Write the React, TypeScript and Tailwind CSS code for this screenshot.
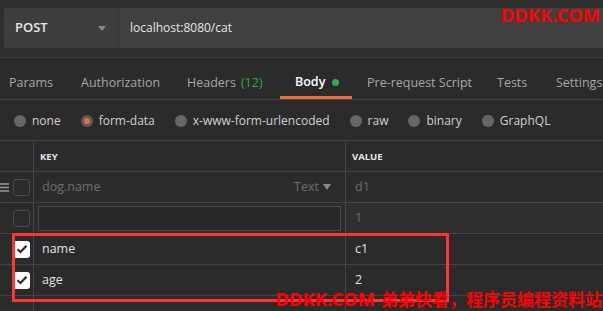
import React from 'react';

const tabs = [
  { label: 'Params', w: 'w-[72px]' },
  { label: 'Authorization', w: 'w-[106px]' },
  { label: 'Headers', badge: '(12)', w: 'w-[93px]' },
  { label: 'Body', active: true, w: 'w-[72px]' },
  { label: 'Pre-request Script', w: 'w-[145px] pl-[15px]' },
  { label: 'Tests', w: 'w-[59px]' },
  { label: 'Settings', w: 'w-[60px]' },
];

const bodyTypes = ['none', 'form-data', 'x-www-form-urlencoded', 'raw', 'binary', 'GraphQL'];

const Check = ({ checked }: { checked?: boolean }) =>
  checked ? (
    <div className="w-[17px] h-[17px] rounded-[3px] bg-white flex items-center justify-center">
      <svg width="12" height="10" viewBox="0 0 12 10">
        <path d="M1.5 5.2 L4.5 8 L10.5 1.8" fill="none" stroke="#2b2b2b" strokeWidth="2.2" />
      </svg>
    </div>
  ) : (
    <div className="w-[17px] h-[17px] rounded-[3px] border border-[#4a4a4a]" />
  );

export default function App() {
  return (
    <div className="relative w-[603px] h-[311px] overflow-hidden bg-[#2b2b2b] text-[#d5d5d5] font-['Open_Sans',sans-serif]">
      {/* request bar */}
      <div className="pt-2 pl-1 bg-[#2f2f2f] h-[58px] border-b border-[#3a3a3a]">
        <div className="flex h-[40px]">
          <div className="w-[115px] bg-[#3e3e3e] rounded-l-[3px] border-r border-[#363636] flex items-center pl-[11px] pr-3">
            <span className="text-[13px] font-semibold text-[#e6e6e6] flex-1">POST</span>
            <svg width="8" height="5" viewBox="0 0 8 5"><path d="M0 0 H8 L4 5 Z" fill="#8a8a8a" /></svg>
          </div>
          <div className="flex-1 bg-[#404040] flex items-center pl-[11px] text-[12px] text-[#e6e6e6]">localhost:8080/cat</div>
        </div>
      </div>

      {/* tabs */}
      <div className="flex h-[42px] border-b border-[#444] text-[12.5px] pl-[9px] whitespace-nowrap">
        {tabs.map((t) => (
          <div
            key={t.label}
            className={
              'shrink-0 flex items-center h-full pt-[10px] ' +
              t.w +
              ' ' +
              (t.active ? 'border-b-[3px] border-[#f26b3a] pl-[15px] text-white font-semibold' : 'text-[#a8a8a8]')
            }
          >
            {t.label}
            {t.badge && <span className="ml-[5px] text-[#26b047]">{t.badge}</span>}
            {t.active && <span className="ml-[7px] w-[7px] h-[7px] rounded-full bg-[#26b047]" />}
          </div>
        ))}
      </div>

      {/* body type radios */}
      <div className="flex items-center h-[40px] pt-[2px] pl-[14px] text-[12px] text-[#d0d0d0] whitespace-nowrap">
        {bodyTypes.map((b) => (
          <div key={b} className="flex items-center mr-[20px]">
            <span
              className={
                'w-[12px] h-[12px] rounded-full mr-[6px] flex items-center justify-center ' +
                (b === 'form-data' ? 'bg-[#5c5c5c]' : 'bg-[#666]')
              }
            >
              {b === 'form-data' && <span className="w-[6px] h-[6px] rounded-full bg-[#f26b3a]" />}
            </span>
            {b}
          </div>
        ))}
      </div>

      {/* table */}
      <div className="border-t border-[#444] text-[12.5px]">
        <div className="grid grid-cols-[34px_312px_1fr] h-[31px] border-b border-[#444]">
          <div className="border-r border-[#444]" />
          <div className="border-r border-[#444] flex items-center pl-[6px] pt-[2px] text-[9.5px] font-bold text-[#e8e8e8]">KEY</div>
          <div className="flex items-center pl-[6px] pt-[2px] text-[9.5px] font-bold text-[#e8e8e8]">VALUE</div>
        </div>

        <div className="grid grid-cols-[34px_312px_1fr] h-[31px] border-b border-[#444]">
          <div className="border-r border-[#444] flex items-center">
            <svg width="9" height="9" viewBox="0 0 9 9" className="mr-[4px]">
              <path d="M0 1 H9 M0 4.5 H9 M0 8 H9" stroke="#9a9a9a" strokeWidth="1.5" />
            </svg>
            <Check />
          </div>
          <div className="border-r border-[#444] flex items-center pl-[8px] pr-[14px] text-[#6e6e6e]">
            <span className="flex-1">dog.name</span>
            <span className="flex items-center gap-[4px]">
              Text
              <svg width="8" height="6" viewBox="0 0 8 6"><path d="M0 0 H8 L4 6 Z" fill="#8a8a8a" /></svg>
            </span>
          </div>
          <div className="flex items-center pl-[9px] text-[#6e6e6e]">d1</div>
        </div>

        <div className="grid grid-cols-[34px_312px_1fr] h-[31px] border-b border-[#444]">
          <div className="border-r border-[#444] flex items-center pl-[13px]">
            <Check />
          </div>
          <div className="border-r border-[#444] flex items-center pl-[4px] pr-[4px]">
            <div className="w-full h-[25px] border border-[#4a4a4a] bg-[#282828]" />
          </div>
          <div className="flex items-center pl-[9px] text-[#6e6e6e] bg-[#2f2f2f]">1</div>
        </div>

        {[
          ['name', 'c1'],
          ['age', '2'],
        ].map(([k, v]) => (
          <div key={k} className="grid grid-cols-[34px_312px_1fr] h-[31px] border-b border-[#444]">
            <div className="border-r border-[#444] flex items-center pl-[13px]">
              <Check checked />
            </div>
            <div className="border-r border-[#444] flex items-center pl-[8px] text-[#e2e2e2]">{k}</div>
            <div className="flex items-center pl-[9px] text-[#e2e2e2]">{v}</div>
          </div>
        ))}

        <div className="grid grid-cols-[34px_312px_1fr] h-[31px]">
          <div className="border-r border-[#444]" />
          <div className="border-r border-[#444] flex items-start pt-[12px] pl-[8px] text-[#5e5e5e]">Key</div>
          <div className="flex items-start pt-[12px] pl-[9px] text-[#5e5e5e]">Value</div>
        </div>
      </div>

      {/* highlight box */}
      <div className="absolute left-[12px] top-[233px] w-[437px] h-[69px] border-[3px] border-[#ff3535] pointer-events-none" />

      {/* watermarks */}
      <div className="absolute right-[3px] top-[1px] text-[18.5px] font-bold text-[#ff0000] font-['Noto_Sans','Noto_Sans_CJK_SC',sans-serif]">DDKK.COM</div>
      <div className="absolute right-[1px] top-[285px] flex items-baseline font-bold text-[#ff0000] whitespace-nowrap font-['Noto_Sans','Noto_Sans_CJK_SC',sans-serif]">
        <span className="text-[18.5px] mr-[6px]">DDKK.COM</span>
        <span className="text-[17px]">弟弟快看，程序员编程资料站</span>
      </div>
    </div>
  );
}
